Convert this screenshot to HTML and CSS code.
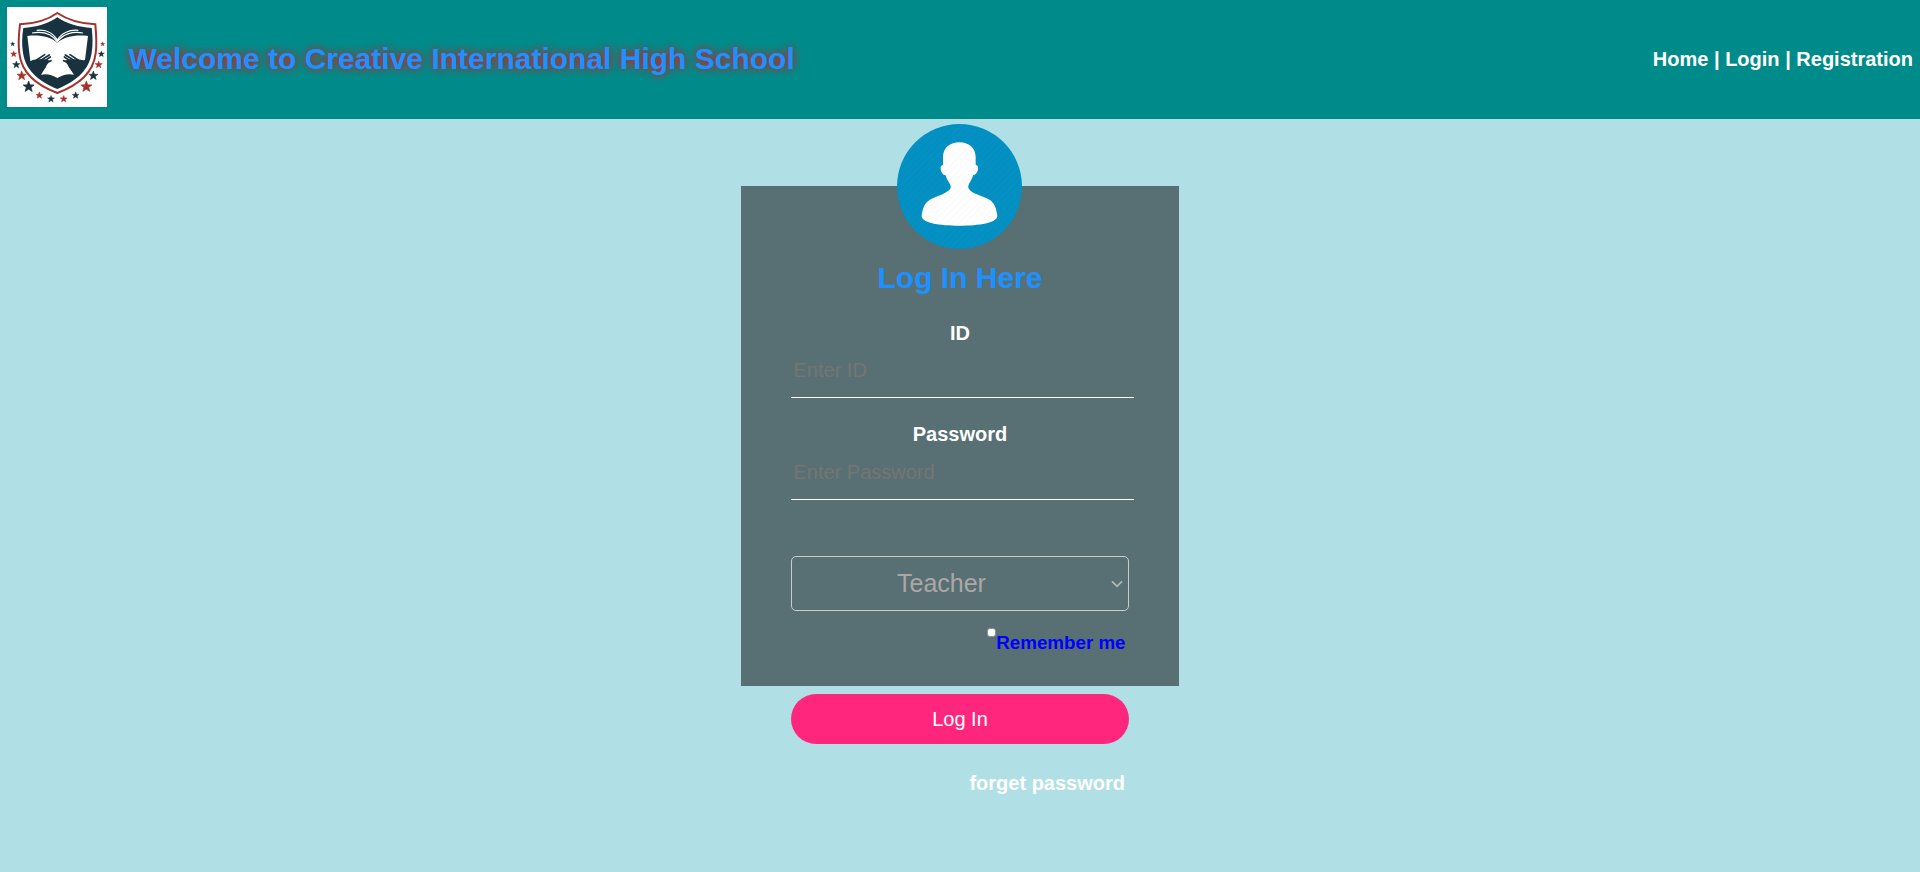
FILE: index.html
```html
<!DOCTYPE html>
<html lang="en">
<head>
<meta charset="utf-8">
<title>Creative International High School</title>
<link rel="stylesheet" href="styles.css">
</head>
<body>
<header class="header">
  <svg class="logo" viewBox="21 21 300 300" aria-label="School crest">
    <defs><path id="star" d="M0-12.500 3.300-4 12.200-3.800 5.300 2 7.800 10.500 0 5.500-7.800 10.500-5.300 2-12.200-3.800-3.300-4Z"/></defs>
    <rect x="21" y="21" width="300" height="300" fill="#fff"/>
    <path d="M172 39C143 60 105 71 60 73C56 105 54 132 58 160C65 218 106 253 172 279C238 253 280 218 287 160C291 132 289 105 286 73C241 71 203 60 172 39Z" fill="#fff" stroke="#a3332e" stroke-width="6"/>
    <path d="M172 52C145 71 108 82 70 84C66 108 65 134 69 158C76 208 112 242 172 267C232 242 268 208 275 158C279 134 278 108 275 84C238 82 199 71 172 52Z" fill="#18323f"/>
    <path d="M82 108C119 104 151 110 172 129C193 110 225 104 264 108L255 180L216 186L206 200L222 224C205 220 188 224 172 234C156 224 140 220 123 224L138 200L128 186L91 184Z" fill="#fff"/>
    <path d="M96 99C130 93 157 103 172 126C187 103 216 93 249 99M110 91C140 88 162 101 172 121C182 101 207 88 235 91" fill="none" stroke="#fff" stroke-width="3.500"/>
    <g id="hand" fill="none" stroke="#18323f" stroke-linecap="round">
      <path d="M87 186Q98 178 110 178L135 178L151 182L142 193Q138 203 128 212L118 222Q94 207 87 186Z" fill="#18323f" stroke="none"/>
      <path d="M110 180 134 164M120 182 148 165M130 185 151 171M138 188 153 182" stroke-width="5"/>
    </g>
    <use href="#hand" transform="matrix(-1 0 0 1 344 0)"/>
    <g fill="#a3332e" stroke="#a3332e" stroke-width="1.500">
      <use href="#star" transform="translate(308 132) scale(.55)"/><use href="#star" transform="translate(41 162) scale(.75)"/>
      <use href="#star" transform="translate(296 194) scale(.9)"/><use href="#star" transform="translate(65 227) scale(1.15)"/>
      <use href="#star" transform="translate(259 260) scale(1.35)"/><use href="#star" transform="translate(118 286) scale(.85)"/>
      <use href="#star" transform="translate(191 297) scale(.85)"/>
    </g>
    <g fill="#18323f" stroke="#18323f" stroke-width="1.500">
      <use href="#star" transform="translate(38 132) scale(.55)"/><use href="#star" transform="translate(304 162) scale(.75)"/>
      <use href="#star" transform="translate(49 194) scale(.9)"/><use href="#star" transform="translate(280 227) scale(1.1)"/>
      <use href="#star" transform="translate(86 260) scale(1.35)"/><use href="#star" transform="translate(227 286) scale(.85)"/>
      <use href="#star" transform="translate(153 297) scale(.85)"/>
    </g>
  </svg>
  <h1 class="title">Welcome to Creative International High School</h1>
  <nav class="nav"><a>Home</a> | <a>Login</a> | <a>Registration</a></nav>
</header>
<main class="login">
  <svg class="avatar" viewBox="52 41 375 375">
    <defs><pattern id="hatch" width="14" height="14" patternUnits="userSpaceOnUse" patternTransform="rotate(45)"><path d="M1 0V14" stroke="#000" stroke-opacity=".035" stroke-width="2"/></pattern></defs>
    <circle cx="239.500" cy="228.500" r="187.500" fill="#0390c3"/>
    <path d="M190 164V139C191 112 211 96 239 96C267 96 287 112 288 139V164C298 163 297 181 290 189C287 194 283 193 280 195C278 209 264 220 266 233C272 249 307 256 327 267C345 277 350 294 353 316C354 337 298 346 239 346C180 346 124 337 126 316C129 294 134 278 153 267C173 256 207 248 213 233C215 220 201 211 198 195C193 194 189 193 186 186C181 175 182 164 190 164Z" fill="#fff"/>
    <circle cx="239.500" cy="228.500" r="187.500" fill="url(#hatch)"/>
  </svg>
  <h2 class="heading">Log In Here</h2>
  <label class="label" for="id">ID</label>
  <input class="field" id="id" type="text" placeholder="Enter ID">
  <label class="label label-password" for="pw">Password</label>
  <input class="field" id="pw" type="password" placeholder="Enter Password">
  <div class="role" role="combobox">
    <span class="role-name">Teacher</span>
    <svg class="chevron" viewBox="0 0 12 8"><path d="M1 1.300 6 6.300 11 1.300"/></svg>
  </div>
  <div class="remember"><span class="check"></span><span>Remember me</span></div>
  <button class="submit" type="button">Log In</button>
  <a class="forgot">forget password</a>
</main>
</body>
</html>
```

FILE: styles.css
```css
* { box-sizing: border-box; }
body {
  margin: 0;
  min-height: 872px;
  background: #b0e0e6;
  font-family: "Liberation Sans", Arial, sans-serif;
  color: #fff;
}
.header {
  display: flex;
  align-items: center;
  height: 119px;
  padding: 0 7px 0 7px;
  background: #008b8b;
}
.logo { width: 100px; height: 100px; margin: 7px 21.5px auto 0; }
.title {
  margin: 0 0 2px;
  font-size: 30px;
  line-height: 34px;
  color: #1e90ff;
  text-shadow: 0 0 8px red;
}
.nav { margin: 0 0 2px auto; font-size: 20px; line-height: 24px; font-weight: bold; }
.login {
  position: relative;
  display: flex;
  flex-direction: column;
  width: 438px;
  height: 500px;
  margin: 67px auto 0;
  padding: 75px 50px 0;
  background: rgba(0, 0, 0, .5);
}
.avatar {
  position: absolute;
  top: -62px;
  left: 156px;
  width: 125px;
  height: 125px;
}
.heading {
  margin: 0 0 27px;
  font-size: 30px;
  line-height: 34px;
  text-align: center;
  color: #1e90ff;
}
.label {
  margin-bottom: 2px;
  font-size: 20px;
  line-height: 22px;
  font-weight: bold;
  text-align: center;
}
.label-password { margin: -1px 0 3px; }
.field {
  flex: none;
  width: 343px;
  height: 52px;
  margin: 0 0 26px;
  padding: 0 2px 3px 2.5px;
  border: 0;
  border-bottom: 1px solid #fff;
  background: transparent;
  font: 20px "Liberation Sans", Arial, sans-serif;
  color: #fff;
}
.field::placeholder { color: #757575; }
.role {
  display: flex;
  align-items: center;
  flex: none;
  height: 55px;
  margin-top: 30px;
  padding-right: 5px;
  border: 1px solid #c8cccd;
  border-radius: 5px;
  color: #aca7a7;
  font-size: 25px;
}
.role-name { flex: 1; padding-left: 105px; }
.chevron { width: 12px; height: 8px; fill: none; stroke: #b5b2b2; stroke-width: 1.8; }
.remember {
  display: flex;
  justify-content: flex-end;
  flex: none;
  height: 22px;
  margin-top: 21px;
  padding-right: 3.5px;
  font-size: 18.75px;
  line-height: 22px;
  font-weight: bold;
  color: blue;
}
.check {
  width: 9px;
  height: 9px;
  margin: -4px 0 0 0;
  border: 1px solid #8f9494;
  border-radius: 3px;
  background: #fff;
}
.submit {
  flex: none;
  height: 50px;
  margin-top: 40px;
  border: 0;
  border-radius: 25px;
  background: #ff267e;
  color: #fff;
  font: 20px "Liberation Sans", Arial, sans-serif;
}
.forgot {
  margin-top: 28px;
  padding-right: 4px;
  font-size: 20px;
  line-height: 22px;
  font-weight: bold;
  text-align: right;
}
```
